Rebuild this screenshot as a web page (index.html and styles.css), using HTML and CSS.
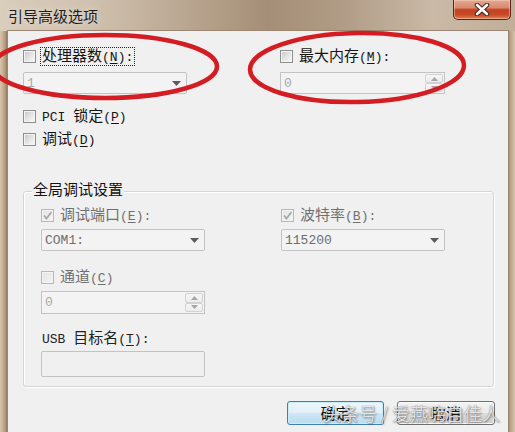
FILE: index.html
```html
<!DOCTYPE html>
<html lang="zh-CN">
<head>
<meta charset="utf-8">
<title>引导高级选项</title>
<link rel="stylesheet" href="styles.css">
</head>
<body>
<div class="window">
  <div class="titlebar">
    <span class="title">引导高级选项</span>
    <div class="close">
      <svg width="18" height="13" viewBox="0 0 18 13"><path d="M4 2 L14 11 M14 2 L4 11" stroke="#4b2219" stroke-width="4.6" stroke-linecap="round"/><path d="M4 2 L14 11 M14 2 L4 11" stroke="#ffffff" stroke-width="2.6" stroke-linecap="round"/></svg>
    </div>
  </div>
  <div class="client">
    <div class="top">
      <div class="pair">
        <div class="field col-a">
          <label class="chk-row"><span class="chk"></span><span class="lbl focus">处理器数<span class="m">(<u>N</u>):</span></span></label>
          <div class="combo faint"><span class="m">1</span><svg class="arrow" width="9" height="5" viewBox="0 0 9 5"><path d="M0 0 H9 L4.5 5 Z" fill="#5d5d5d"/></svg></div>
        </div>
        <div class="field">
          <label class="chk-row"><span class="chk"></span><span class="lbl">最大内存<span class="m">(<u>M</u>):</span></span></label>
          <div class="spin faint wide"><span class="m">0</span>
            <div class="spin-btns"><span class="sb"><svg width="7" height="4" viewBox="0 0 7 4"><path d="M0 4 H7 L3.5 0 Z" fill="#a6a6a6"/></svg></span><span class="sb"><svg width="7" height="4" viewBox="0 0 7 4"><path d="M0 0 H7 L3.5 4 Z" fill="#a6a6a6"/></svg></span></div>
          </div>
        </div>
      </div>
      <label class="chk-row pci"><span class="chk"></span><span class="lbl"><span class="m">PCI </span>锁定<span class="m">(<u>P</u>)</span></span></label>
      <label class="chk-row dbg"><span class="chk"></span><span class="lbl">调试<span class="m">(<u>D</u>)</span></span></label>
    </div>

    <div class="group">
      <span class="group-title">全局调试设置</span>
      <div class="pair">
        <div class="field col-g">
          <label class="chk-row off"><span class="chk dis"><svg width="11" height="11" viewBox="0 0 11 11"><path d="M2 5.5 L4.5 8.5 L9.5 2" fill="none" stroke="#a9a9a9" stroke-width="1.8"/></svg></span><span class="lbl">调试端口<span class="m">(<u>E</u>):</span></span></label>
          <div class="combo dim"><span class="m">COM1:</span><svg class="arrow" width="9" height="5" viewBox="0 0 9 5"><path d="M0 0 H9 L4.5 5 Z" fill="#5d5d5d"/></svg></div>
        </div>
        <div class="field">
          <label class="chk-row off"><span class="chk dis"><svg width="11" height="11" viewBox="0 0 11 11"><path d="M2 5.5 L4.5 8.5 L9.5 2" fill="none" stroke="#a9a9a9" stroke-width="1.8"/></svg></span><span class="lbl">波特率<span class="m">(<u>B</u>):</span></span></label>
          <div class="combo dim"><span class="m">115200</span><svg class="arrow" width="9" height="5" viewBox="0 0 9 5"><path d="M0 0 H9 L4.5 5 Z" fill="#5d5d5d"/></svg></div>
        </div>
      </div>
      <div class="field chan">
        <label class="chk-row off"><span class="chk dis"></span><span class="lbl">通道<span class="m">(<u>C</u>)</span></span></label>
        <div class="spin faint tall"><span class="m">0</span>
          <div class="spin-btns"><span class="sb"><svg width="7" height="4" viewBox="0 0 7 4"><path d="M0 4 H7 L3.5 0 Z" fill="#a6a6a6"/></svg></span><span class="sb"><svg width="7" height="4" viewBox="0 0 7 4"><path d="M0 0 H7 L3.5 4 Z" fill="#a6a6a6"/></svg></span></div>
        </div>
      </div>
      <div class="chk-row usb"><span class="lbl"><span class="m">USB </span>目标名<span class="m">(<u>T</u>):</span></span></div>
      <div class="textbox"></div>
    </div>

    <div class="buttons">
      <div class="btn default">确定</div>
      <div class="btn">取消</div>
    </div>
  </div>

  <svg class="marks" width="515" height="432" viewBox="0 0 515 432">
    <ellipse cx="105" cy="66.5" rx="112" ry="31.5" fill="none" stroke="#d41c23" stroke-width="4.5"/>
    <ellipse cx="357" cy="67.5" rx="107" ry="34.5" transform="rotate(-1.2 357 67.5)" fill="none" stroke="#d41c23" stroke-width="4.5"/>
  </svg>
  <div class="watermark">头条号 / 爱燕嗨自佳人</div>
</div>
</body>
</html>
```

FILE: styles.css
```css
* { box-sizing: border-box; }
html, body { margin: 0; padding: 0; }
body {
  width: 515px;
  height: 432px;
  overflow: hidden;
  font-family: "Noto Sans CJK SC", sans-serif;
  background: #c4b29c;
}
.window {
  position: relative;
  width: 515px;
  height: 432px;
  display: flex;
  flex-direction: column;
  overflow: hidden;
  background: linear-gradient(90deg, #d8c6ad 0px, #c6af93 3px, #a88f75 6px, #8e7760 7px, #f0f0f0 8px, #f0f0f0 507px, #8e7760 508px, #b8a187 510px, #d6c3aa 515px);
}
.titlebar {
  height: 31px;
  flex: none;
  display: flex;
  justify-content: space-between;
  align-items: flex-start;
  background: linear-gradient(90deg, #d9cdbb 0%, #cfc1af 18%, #b7a38d 38%, #a48e77 52%, #b09b85 66%, #c9b9a6 84%, #c2ae99 100%);
}
.title {
  padding-left: 8px;
  line-height: 31px;
  font-size: 15px;
  color: #1e1e1e;
  text-shadow: 0 0 6px rgba(255, 255, 255, 0.55);
}
.close {
  width: 58px;
  height: 20px;
  margin-right: 4px;
  border: 1px solid #5e2318;
  border-top: none;
  border-radius: 0 0 5px 5px;
  background: linear-gradient(180deg, #e2a894 0%, #d98a70 40%, #c2401f 52%, #c84a27 78%, #e08657 100%);
  box-shadow: inset 0 0 0 1px rgba(255, 220, 200, 0.45);
  display: flex;
  align-items: center;
  justify-content: center;
}
.client {
  flex: 1;
  margin: 0 7px 0 8px;
  background: #f0f0f0;
  box-shadow: 0 0 0 1px #9a8670;
  display: flex;
  flex-direction: column;
}
.m {
  font-family: "Liberation Mono", monospace;
  font-size: 13px;
}
u { text-underline-offset: 2px; }
.top {
  padding: 18px 0 0 15px;
  display: flex;
  flex-direction: column;
}
.pair { display: flex; }
.field {
  display: flex;
  flex-direction: column;
  gap: 9px;
}
.col-a { width: 257px; }
.chk-row {
  display: flex;
  align-items: center;
  gap: 5px;
  height: 14px;
  font-size: 15px;
  line-height: 14px;
  white-space: nowrap;
  color: #151515;
}
.lbl { padding: 0 1px; }
.focus { outline: 1px dotted #222; outline-offset: 0; }
.chk {
  width: 13px;
  height: 13px;
  flex: none;
  border: 1px solid #8e8f8f;
  background: linear-gradient(135deg, #c4c6c8 0%, #e6e6e6 55%, #fbfbfb 100%);
  box-shadow: inset 0 0 0 1px #f3f3f3;
  display: flex;
  align-items: center;
  justify-content: center;
}
.chk.dis {
  border-color: #b7b7b7;
  background: linear-gradient(135deg, #e4e4e4 0%, #f4f4f4 100%);
}
.off { color: #707070; }
.combo {
  width: 164px;
  height: 22px;
  border: 1px solid #c3c3c3;
  border-radius: 2px;
  background: #f3f3f3;
  padding: 0 5px 0 3px;
  display: flex;
  align-items: center;
  justify-content: space-between;
}
.faint { color: #a9a9a9; }
.dim { color: #6d6d6d; }
.spin {
  width: 164px;
  height: 22px;
  border: 1px solid #c3c3c3;
  background: #f3f3f3;
  padding: 1px 1px 1px 3px;
  display: flex;
  align-items: center;
}
.spin.wide { width: 165px; }
.spin.tall { height: 23px; }
.spin-btns {
  margin-left: auto;
  width: 18px;
  align-self: stretch;
  display: flex;
  flex-direction: column;
}
.sb {
  flex: 1;
  border: 1px solid #d2d2d2;
  border-radius: 2px;
  background: linear-gradient(180deg, #f6f6f6, #ececec);
  display: flex;
  align-items: center;
  justify-content: center;
}
.pci { margin-top: 15px; }
.dbg { margin-top: 9px; }

.group {
  position: relative;
  margin: 45px 14px 0 15px;
  height: 196px;
  border: 1px solid #d5d5d5;
  border-radius: 3px;
  box-shadow: inset 1px 1px 0 #ffffff, 1px 1px 0 #ffffff;
  padding: 16px 0 0 17px;
  display: flex;
  flex-direction: column;
}
.group-title {
  position: absolute;
  left: 8px;
  top: -12px;
  padding: 0 1px;
  background: #f0f0f0;
  font-size: 15px;
  line-height: 18px;
  color: #111;
}
.group .field { gap: 7px; }
.col-g { width: 240px; }
.chan { margin-top: 19px; }
.usb { margin-top: 17px; color: #222; }
.textbox {
  margin-top: 6px;
  width: 164px;
  height: 26px;
  border: 1px solid #c3c3c3;
  border-radius: 2px;
  background: #f0f0f0;
}
.buttons {
  margin-top: 14px;
  padding-right: 13px;
  display: flex;
  justify-content: flex-end;
  gap: 13px;
}
.btn {
  width: 98px;
  height: 24px;
  border: 1px solid #707070;
  border-radius: 3px;
  background: linear-gradient(180deg, #f2f2f2 0%, #ebebeb 49%, #dddddd 50%, #cfcfcf 100%);
  box-shadow: inset 0 0 0 1px #fbfbfb;
  font-size: 15px;
  line-height: 22px;
  text-align: center;
  color: #111;
}
.btn.default {
  width: 97px;
  border-color: #3c7fb1;
  background: linear-gradient(180deg, #eef6fb 0%, #e1eff8 49%, #cfe6f4 50%, #bcdcef 100%);
  box-shadow: inset 0 0 0 1px #c9ecfb;
}
.marks {
  position: absolute;
  left: 0;
  top: 0;
  pointer-events: none;
}
.watermark {
  position: absolute;
  left: 323px;
  top: 402px;
  font-size: 18px;
  line-height: 22px;
  white-space: nowrap;
  color: rgba(255, 255, 255, 0.82);
  text-shadow: 0 0 1px rgba(0, 0, 0, 0.55), 1px 1px 2px rgba(0, 0, 0, 0.35);
}
```
